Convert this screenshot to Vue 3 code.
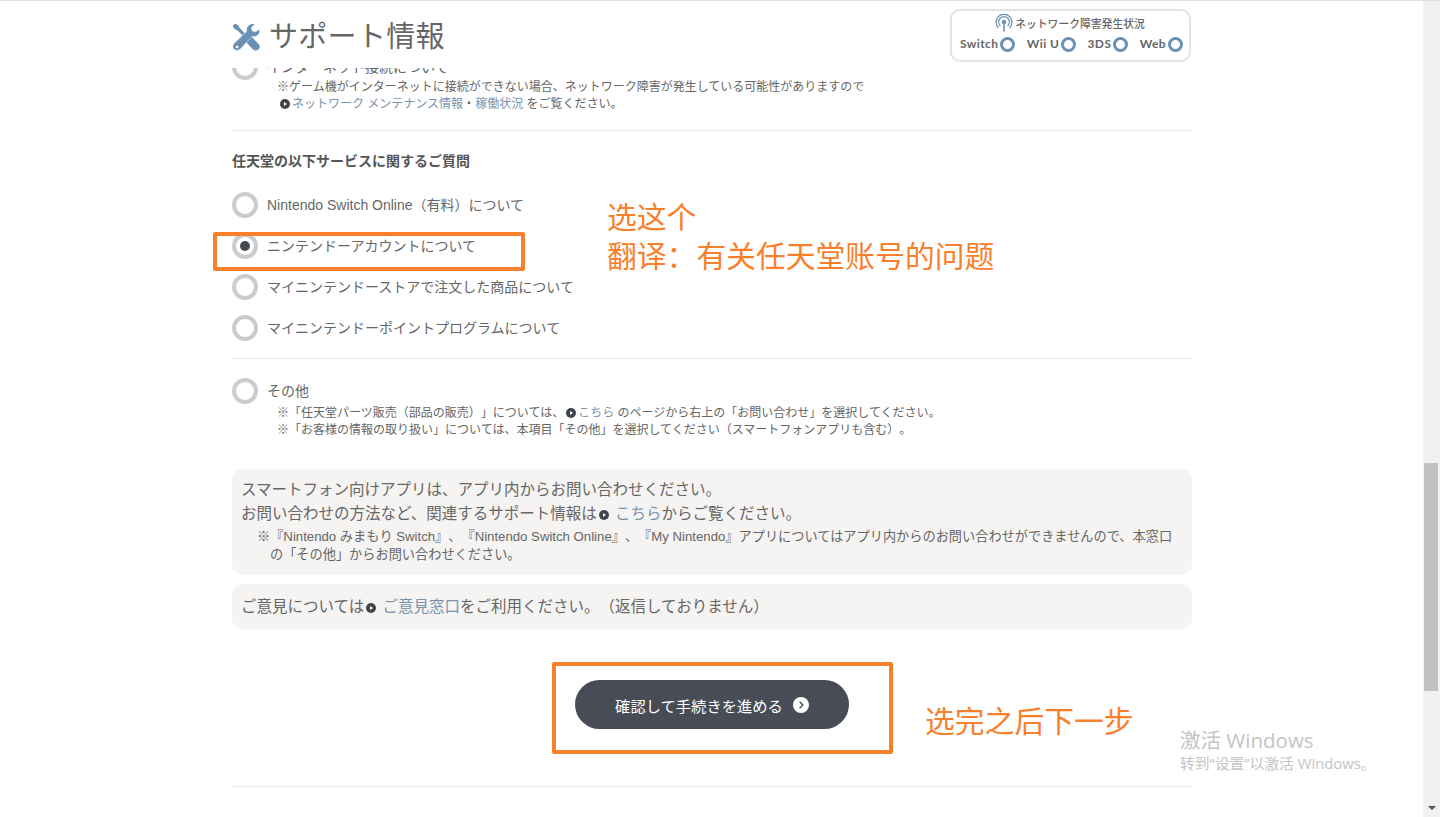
<template>
  <div class="page">
    <div class="main">
      <div class="column">
        <header class="head">
          <h1 class="title">
            <svg class="tool-icon" viewBox="0 0 28 28">
              <path d="M0.6 3 L3 0.6 L6.4 2.6 L7.6 5 L16 13.4 L18.4 12.6 L27 21.4 Q28.6 24.8 26.4 26.6 Q23.6 28.6 21 26.4 L12.8 17.8 L13.8 15.6 L5.2 7.2 L2.6 6 Z" fill="#6a90b4" />
              <path d="M27.9 6 Q28.2 11 24.6 13 Q22.2 14.2 20 13.4 L8 26.4 Q5 28.6 2.2 26.6 Q-0.4 23.8 1.6 20.8 L14.6 8.4 Q13.8 4.6 16.4 2.4 Q19.2 0 23.2 1 L19.4 4.8 L20.2 8 L23.6 8.8 Z" fill="#6a90b4" stroke="#fff" stroke-width="0.5" />
              <circle cx="5" cy="24" r="1.3" fill="#fff" />
            </svg>
            サポート情報
          </h1>
          <div class="status">
            <div class="status-title">
              <svg class="signal" viewBox="0 0 18 18">
                <circle cx="9" cy="8" r="2.2" fill="#6a90b4" />
                <path d="M9 8 V17.5" stroke="#6a90b4" stroke-width="1.6" />
                <path d="M5.4 12 A5.4 5.4 0 1 1 12.6 12" fill="none" stroke="#6a90b4" stroke-width="1.2" />
                <path d="M3.4 14 A8 8 0 1 1 14.6 14" fill="none" stroke="#6a90b4" stroke-width="1.2" />
              </svg>
              ネットワーク障害発生状況
            </div>
            <div class="status-list">
              <span v-for="name in systems" :key="name" class="status-item">
                {{ name }}<i class="status-dot"></i>
              </span>
            </div>
          </div>
        </header>

        <div class="cut-row">
          <div class="cut-inner">
            <span class="radio"></span>
            <span class="radio-label">インターネット接続について</span>
          </div>
        </div>
        <div class="note note-first">
          <p>※ゲーム機がインターネットに接続ができない場合、ネットワーク障害が発生している可能性がありますので</p>
          <p class="indent-link"><i class="bullet"></i><a>ネットワーク メンテナンス情報</a>・<a>稼働状況</a> をご覧ください。</p>
        </div>
        <hr class="rule rule-a" />

        <h2 class="section-title">任天堂の以下サービスに関するご質問</h2>
        <ul class="radio-list">
          <li v-for="item in services" :key="item.label" class="radio-row">
            <span :class="['radio', { checked: item.checked }]"></span>
            <span class="radio-label">{{ item.label }}</span>
          </li>
        </ul>
        <hr class="rule rule-b" />

        <div class="radio-row other-row">
          <span class="radio"></span>
          <span class="radio-label">その他</span>
        </div>
        <div class="note note-other">
          <p>※「任天堂パーツ販売（部品の販売）」については、<i class="bullet"></i><a>こちら</a> のページから右上の「お問い合わせ」を選択してください。</p>
          <p>※「お客様の情報の取り扱い」については、本項目「その他」を選択してください（スマートフォンアプリも含む）。</p>
        </div>

        <div class="box box-apps">
          <p>スマートフォン向けアプリは、アプリ内からお問い合わせください。</p>
          <p>お問い合わせの方法など、関連するサポート情報は<i class="bullet"></i> <a>こちら</a>からご覧ください。</p>
          <p class="box-note">※『Nintendo みまもり Switch』、『Nintendo Switch Online』、『My Nintendo』アプリについてはアプリ内からのお問い合わせができませんので、本窓口の「その他」からお問い合わせください。</p>
        </div>
        <div class="box box-opinion">
          <p>ご意見については<i class="bullet"></i> <a>ご意見窓口</a>をご利用ください。（返信しておりません）</p>
        </div>

        <div class="action">
          <button class="next-btn">
            確認して手続きを進める
            <svg class="next-icon" viewBox="0 0 16 16">
              <circle cx="8" cy="8" r="8" fill="#fff" />
              <path d="M6.6 4.8 L9.8 8 L6.6 11.2" fill="none" stroke="#474c56" stroke-width="1.4" />
            </svg>
          </button>
        </div>
        <hr class="rule rule-c" />
      </div>

      <!-- annotations drawn on top of the screenshot -->
      <div class="mark mark-account"></div>
      <div class="mark mark-next"></div>
      <div class="hint hint-account">选这个<br />翻译：有关任天堂账号的问题</div>
      <div class="hint hint-next">选完之后下一步</div>
      <div class="watermark">
        <div class="wm-big">激活 Windows</div>
        <div class="wm-small">转到“设置”以激活 Windows。</div>
      </div>
    </div>

    <div class="scrollbar">
      <div class="thumb"></div>
      <div class="arrow"></div>
    </div>
  </div>
</template>

<script setup>
const systems = ['Switch', 'Wii U', '3DS', 'Web'];

const services = [
  { label: 'Nintendo Switch Online（有料）について' },
  { label: 'ニンテンドーアカウントについて', checked: true },
  { label: 'マイニンテンドーストアで注文した商品について' },
  { label: 'マイニンテンドーポイントプログラムについて' }
];
</script>

<style>
html, body {
  margin: 0;
  height: 100%;
  overflow: hidden;
  background: #fff;
}
</style>

<style scoped>
.page {
  display: flex;
  height: 817px;
  overflow: hidden;
  font-family: "Liberation Sans", "Noto Sans CJK JP", sans-serif;
  text-spacing-trim: space-all;
  color: #666;
  background: #fff;
  border-top: 1px solid #dedede;
  box-sizing: border-box;
}

.main {
  position: relative;
  flex: 1;
}

.column {
  width: 960px;
  margin-left: 232px;
}

p {
  margin: 0;
}

a {
  color: #7a93ad;
}

.head {
  display: flex;
  justify-content: space-between;
  align-items: flex-start;
  height: 67px;
}

.title {
  display: flex;
  align-items: center;
  gap: 9px;
  margin: 18px 0 0;
  font-size: 29px;
  line-height: 36px;
  font-weight: 400;
  letter-spacing: 0.3px;
  color: #666;
}

.tool-icon {
  width: 28px;
  height: 28px;
}

.status {
  width: 241px;
  height: 53px;
  margin: 8px 1px 0 0;
  box-sizing: border-box;
  border: 2px solid #e4e4e4;
  border-radius: 10px;
  text-align: center;
  color: #666;
}

.status-title {
  display: flex;
  align-items: center;
  justify-content: center;
  gap: 2px;
  padding: 2px 1px 1px 0;
  height: 20px;
  font-size: 10.8px;
  font-weight: 500;
}

.signal {
  width: 18px;
  height: 18px;
}

.status-list {
  display: flex;
  justify-content: space-between;
  padding: 2px 6px 0 8px;
  font-family: "Lato", "Liberation Sans", sans-serif;
  font-size: 12px;
  font-weight: 700;
  line-height: 16px;
  letter-spacing: 0.4px;
}

.status-item {
  display: flex;
  align-items: center;
  gap: 2px;
}

.status-dot {
  width: 15px;
  height: 15px;
  box-sizing: border-box;
  border: 3px solid #6a90b4;
  border-radius: 50%;
}

.cut-row {
  height: 12px;
  overflow: hidden;
  display: flex;
  align-items: flex-end;
}

.cut-inner {
  display: flex;
  align-items: center;
  gap: 9px;
  flex: none;
}

.radio {
  flex: none;
  width: 26px;
  height: 26px;
  box-sizing: border-box;
  border: 4px solid #ccc;
  border-radius: 50%;
  display: flex;
  align-items: center;
  justify-content: center;
  background: #fff;
}

.radio.checked::after {
  content: "";
  width: 10px;
  height: 10px;
  border-radius: 50%;
  background: #454a52;
}

.radio-label {
  font-size: 14px;
  line-height: 20px;
}

.note {
  font-size: 12px;
  line-height: 17px;
  padding-left: 45px;
}

.note-first {
  margin-top: -1px;
}

.indent-link {
  padding-left: 1px;
}

.bullet {
  display: inline-flex;
  align-items: center;
  justify-content: center;
  vertical-align: 2px;
  width: 10px;
  height: 10px;
  margin: 0 2px;
  border-radius: 50%;
  background: #3f444c;
}

.bullet::after {
  content: "";
  margin-left: 1px;
  border-left: 3px solid #fff;
  border-top: 2px solid transparent;
  border-bottom: 2px solid transparent;
}

.rule {
  height: 1px;
  margin: 0;
  border: 0;
  background: #e8e8e8;
}

.rule-a {
  margin-top: 17px;
}

.section-title {
  margin: 20px 0 0;
  font-size: 14px;
  line-height: 20px;
  font-weight: 700;
  color: #555;
}

.radio-list {
  list-style: none;
  margin: 13px 0 0;
  padding: 0;
}

.radio-row {
  display: flex;
  align-items: center;
  gap: 9px;
  height: 41px;
}

.rule-b {
  margin-top: 10px;
}

.other-row {
  height: 26px;
  margin-top: 19px;
}

.note-other {
  margin-top: 1px;
}

.box {
  background: #f5f4f2;
  border-radius: 10px;
  padding: 0 9px;
  font-size: 15.5px;
  line-height: 24px;
}

.box-apps {
  margin-top: 30px;
  height: 106px;
  box-sizing: border-box;
  padding-top: 9px;
}

.box-note {
  margin-top: 2px;
  padding: 0 9px 0 29px;
  text-indent: -13px;
  font-size: 13.2px;
  line-height: 18px;
}

.box-opinion {
  margin-top: 9px;
  height: 45px;
  display: flex;
  align-items: center;
}

.action {
  display: flex;
  justify-content: center;
  margin-top: 51px;
}

.next-btn {
  display: flex;
  align-items: center;
  justify-content: center;
  gap: 10px;
  width: 274px;
  height: 49px;
  padding: 0;
  border: 0;
  border-radius: 25px;
  background: #474c56;
  color: #fff;
  font-family: inherit;
  font-size: 15.3px;
}

.next-icon {
  width: 16px;
  height: 16px;
}

.rule-c {
  margin-top: 57px;
}

.mark {
  position: absolute;
  box-sizing: border-box;
  border: 4px solid #f8802c;
  border-radius: 2px;
}

.mark-account {
  left: 213px;
  top: 231px;
  width: 312px;
  height: 39px;
}

.mark-next {
  left: 552px;
  top: 661px;
  width: 341px;
  height: 92px;
}

.hint {
  position: absolute;
  font-family: "Noto Sans CJK SC", sans-serif;
  font-size: 29.8px;
  line-height: 39px;
  color: #f8802c;
}

.hint-account {
  left: 607px;
  top: 195px;
}

.hint-next {
  left: 925px;
  top: 699px;
}

.watermark {
  position: absolute;
  left: 1180px;
  top: 725px;
  color: #c4c4c4;
  font-family: "Open Sans", "Noto Sans CJK SC", sans-serif;
}

.wm-big {
  font-size: 20.5px;
  line-height: 28px;
}

.wm-small {
  font-size: 14.8px;
  line-height: 19px;
}

.scrollbar {
  position: relative;
  flex: none;
  width: 17px;
  background: #f1f1f1;
}

.thumb {
  margin: 462px 2px 0 1px;
  height: 228px;
  background: #c1c1c1;
}

.arrow {
  position: absolute;
  left: 5px;
  bottom: 7px;
  border: 4px solid transparent;
  border-top: 4px solid #505050;
  border-bottom: 0;
}
</style>
